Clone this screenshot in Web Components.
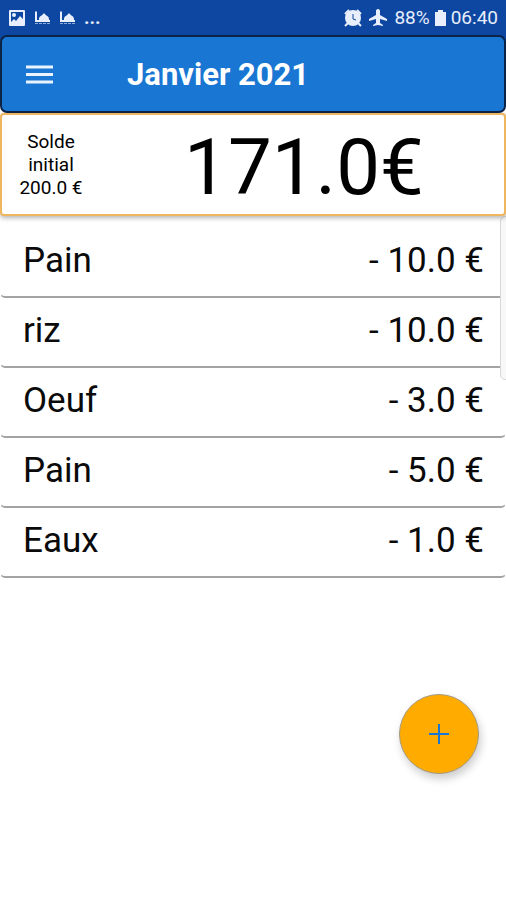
<!DOCTYPE html>
<html lang="fr">
<head>
<meta charset="utf-8">
<meta name="viewport" content="width=device-width, initial-scale=1">
<title>Janvier 2021</title>
<style>
  body {
    margin: 0;
    background: #fff;
    color: #0a0a0a;
    font-family: Roboto, "Liberation Sans", sans-serif;
  }
</style>
</head>
<body>
<budget-app>
  <status-bar slot="status" battery="88%" time="06:40"></status-bar>
  <app-header slot="header">Janvier 2021</app-header>
  <balance-card slot="balance" total="171.0€">
    <span>Solde</span>
    <span>initial</span>
    <span>200.0 €</span>
  </balance-card>
  <expense-row amount="- 10.0 €">Pain</expense-row>
  <expense-row amount="- 10.0 €">riz</expense-row>
  <expense-row amount="- 3.0 €">Oeuf</expense-row>
  <expense-row amount="- 5.0 €">Pain</expense-row>
  <expense-row amount="- 1.0 €">Eaux</expense-row>
  <add-button slot="action"></add-button>
</budget-app>

<script>
const createTemplate = (html) => {
  const template = document.createElement('template');
  template.innerHTML = html;
  return template;
};

class BaseElement extends HTMLElement {
  constructor() {
    super();

    this.attachShadow({ mode: 'open' });
    this.shadowRoot.appendChild(this.constructor.template.content.cloneNode(true));
  }

  setText(selector, value) {
    this.shadowRoot.querySelector(selector).textContent = value;
  }
}

class BudgetApp extends BaseElement {
  static template = createTemplate(`
    <style>
      :host {
        display: flex;
        flex-direction: column;
        min-height: 100vh;
        position: relative;
        overflow: hidden;
      }
      header {
        background: linear-gradient(#0d47a1 50%, #fff 50%);
      }
      main {
        position: relative;
        padding-top: 12px;
      }
      .scroll {
        position: absolute;
        top: 0;
        right: -4px;
        box-sizing: border-box;
        width: 10px;
        height: 164px;
        border: 1px solid #d8d8d8;
        border-radius: 5px;
        background: #f8f8f8;
      }
      .action {
        position: absolute;
        right: 27px;
        bottom: 126px;
      }
    </style>
    <header>
      <slot name="status"></slot>
      <slot name="header"></slot>
    </header>
    <slot name="balance"></slot>
    <main>
      <slot></slot>
      <div class="scroll"></div>
    </main>
    <div class="action"><slot name="action"></slot></div>
  `);
}

class StatusBar extends BaseElement {
  static template = createTemplate(`
    <style>
      :host {
        display: flex;
        align-items: center;
        justify-content: space-between;
        height: 35px;
        padding: 0 8px;
        color: #e8eefb;
        font-size: 19px;
        line-height: 24px;
      }
      div {
        display: flex;
        align-items: center;
      }
      .left {
        gap: 8px;
      }
      .dots {
        font-weight: 700;
      }
      .right {
        gap: 4px;
      }
      svg {
        display: block;
        fill: currentColor;
      }
    </style>
    <div class="left">
      <svg width="18" height="18" viewBox="0 0 18 18">
        <rect x="1" y="1" width="16" height="16" rx="1"/>
        <path d="M3 3h12v7l-3-3-4 5-2-2-3 3z" fill="#0d47a1"/>
        <circle cx="6" cy="6" r="2"/>
      </svg>
      <svg width="17" height="16" viewBox="0 0 17 16">
        <path d="M1 2l1-1 1 1v8h2V9c0-3 3-3 5-6 2 3 5 3 5 6v1h1v2H1z"/>
        <path d="M1 13h3v1H1zM5 13h3v1H5zM9 13h3v1H9zM13 13h3v1h-3z" opacity=".6"/>
      </svg>
      <svg width="17" height="16" viewBox="0 0 17 16">
        <path d="M1 2l1-1 1 1v8h2V9c0-3 3-3 5-6 2 3 5 3 5 6v1h1v2H1z"/>
        <path d="M1 13h3v1H1zM5 13h3v1H5zM9 13h3v1H9zM13 13h3v1h-3z" opacity=".6"/>
      </svg>
      <span class="dots">...</span>
    </div>
    <div class="right">
      <svg width="18" height="18" viewBox="0 0 18 18">
        <circle cx="9" cy="9" r="8"/>
        <path d="M1 5l4-4M17 5l-4-4M4 14l-3 3M14 14l3 3" stroke="currentColor" stroke-width="2"/>
        <path d="M9 5v5l3 1" fill="none" stroke="#0d47a1"/>
      </svg>
      <svg width="24" height="20" viewBox="0 0 24 20">
        <path d="M12 1c-1.500 0-2 1-2 2v4l-7 4v2l7-2v4l-3 2v1l5-1 5 1v-1l-3-2v-4l7 2v-2l-7-4V3c0-1-.5-2-2-2z"/>
      </svg>
      <span class="battery"></span>
      <svg width="13" height="18" viewBox="0 0 13 18">
        <path d="M4 1h5v2h3v14H1V3h3z"/>
      </svg>
      <span class="time"></span>
    </div>
  `);

  static get observedAttributes() {
    return ['battery', 'time'];
  }

  attributeChangedCallback(name, oldValue, newValue) {
    this.setText(`.${name}`, newValue);
  }
}

class AppHeader extends BaseElement {
  static template = createTemplate(`
    <style>
      :host {
        display: flex;
        align-items: center;
        gap: 70px;
        box-sizing: border-box;
        height: 78px;
        padding: 2px 20px 0;
        border: 2px solid #0b2347;
        border-radius: 7px;
        background: #1976d2;
        color: #fff;
      }
      button {
        padding: 4px;
        border: 0;
        background: none;
        color: #eaf4ff;
      }
      svg {
        display: block;
      }
      h1 {
        margin: 0;
        font-size: 31px;
        font-weight: 700;
        line-height: 40px;
      }
    </style>
    <button type="button" aria-label="Menu">
      <svg width="27" height="20" viewBox="0 0 27 20">
        <path d="M0 2h27M0 9.500h27M0 17h27" stroke="currentColor" stroke-width="3"/>
      </svg>
    </button>
    <h1><slot></slot></h1>
  `);
}

class BalanceCard extends BaseElement {
  static template = createTemplate(`
    <style>
      :host {
        display: flex;
        align-items: center;
        box-sizing: border-box;
        height: 103px;
        border: 2px solid #f0b55f;
        border-radius: 4px;
        background: #fff;
        box-shadow: 0 2px 5px rgba(0, 0, 0, 0.3);
        position: relative;
        z-index: 1;
        color: #000;
      }
      .initial {
        display: flex;
        flex-direction: column;
        align-items: center;
        width: 98px;
        font-size: 19px;
        line-height: 23px;
      }
      .total {
        flex: 1;
        padding: 6px 0 0 4px;
        font-size: 78px;
        line-height: 92px;
        text-align: center;
      }
    </style>
    <div class="initial"><slot></slot></div>
    <div class="total"></div>
  `);

  static get observedAttributes() {
    return ['total'];
  }

  attributeChangedCallback(name, oldValue, newValue) {
    this.setText('.total', newValue);
  }
}

class ExpenseRow extends BaseElement {
  static template = createTemplate(`
    <style>
      :host {
        display: flex;
        align-items: center;
        justify-content: space-between;
        box-sizing: border-box;
        height: 70px;
        padding: 0 21px 4px 22px;
        border: 1px solid transparent;
        border-bottom: 2px solid #a3a3a3;
        border-radius: 5px;
        font-size: 35px;
        line-height: 42px;
      }
    </style>
    <span><slot></slot></span>
    <span class="amount"></span>
  `);

  static get observedAttributes() {
    return ['amount'];
  }

  attributeChangedCallback(name, oldValue, newValue) {
    this.setText('.amount', newValue);
  }
}

class AddButton extends BaseElement {
  static template = createTemplate(`
    <style>
      :host {
        display: block;
      }
      button {
        display: grid;
        place-items: center;
        width: 80px;
        height: 80px;
        padding: 0;
        border: 1px solid #a39a80;
        border-radius: 50%;
        background: #ffab00;
        box-shadow: 2px 5px 8px rgba(0, 0, 0, 0.2);
        color: #1976d2;
      }
    </style>
    <button type="button" aria-label="Ajouter">
      <svg width="20" height="20" viewBox="0 0 20 20">
        <path d="M10 0v20M0 10h20" stroke="currentColor" stroke-width="2"/>
      </svg>
    </button>
  `);
}

window.customElements.define('budget-app', BudgetApp);
window.customElements.define('status-bar', StatusBar);
window.customElements.define('app-header', AppHeader);
window.customElements.define('balance-card', BalanceCard);
window.customElements.define('expense-row', ExpenseRow);
window.customElements.define('add-button', AddButton);
</script>
</body>
</html>
